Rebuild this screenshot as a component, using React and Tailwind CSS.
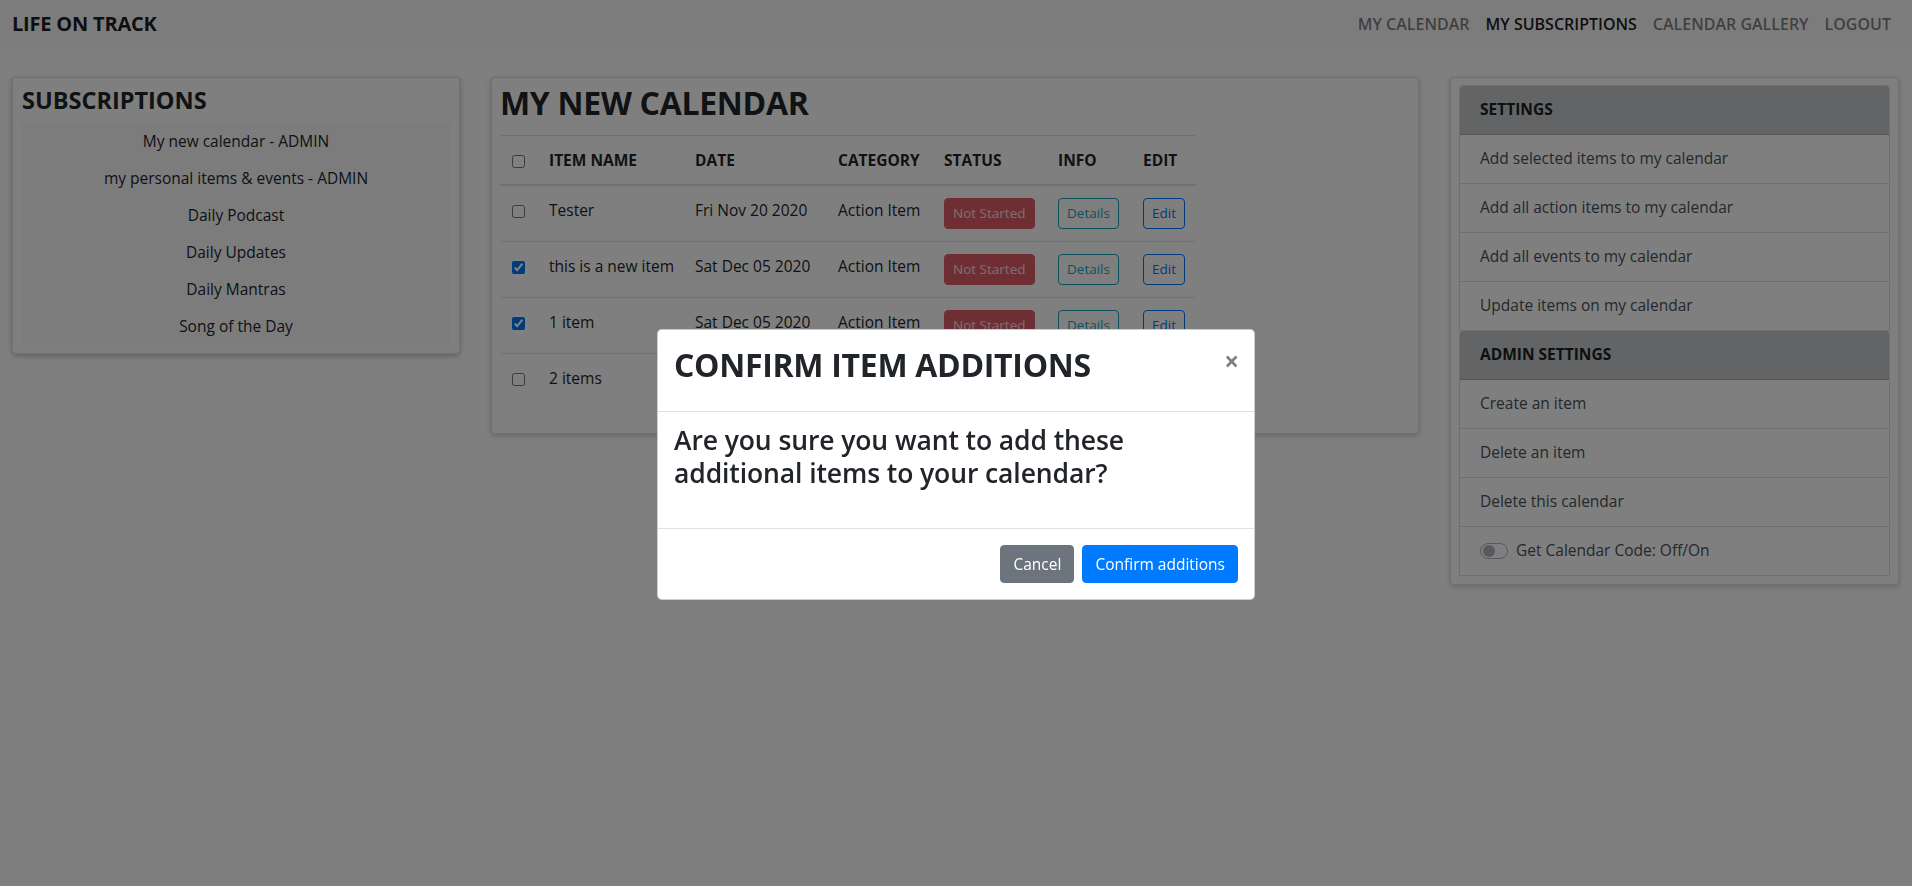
import React from 'react';

const subscriptions = [
    'My new calendar - ADMIN',
    'my personal items & events - ADMIN',
    'Daily Podcast',
    'Daily Updates',
    'Daily Mantras',
    'Song of the Day',
];

const items = [
    { name: 'Tester', date: 'Fri Nov 20 2020', checked: false },
    { name: 'this is a new item', date: 'Sat Dec 05 2020', checked: true },
    { name: '1 item', date: 'Sat Dec 05 2020', checked: true },
    { name: '2 items', date: 'Sat Dec 05 2020', checked: false },
];

const settings = [
    'Add selected items to my calendar',
    'Add all action items to my calendar',
    'Add all events to my calendar',
    'Update items on my calendar',
];

const adminSettings = ['Create an item', 'Delete an item', 'Delete this calendar'];

function Navbar() {
    return (
        <nav className="h-[48px] bg-[#f8f9fa] flex items-center justify-between pl-3 pr-[13px]">
            <span className="text-[20px] font-bold text-black/90 tracking-[-0.2px]">LIFE ON TRACK</span>
            <div className="flex items-center text-[16px] font-semibold">
                <a className="px-2 text-black/50">MY CALENDAR</a>
                <a className="px-2 text-black/90">MY SUBSCRIPTIONS</a>
                <a className="px-2 text-black/50">CALENDAR GALLERY</a>
                <a className="px-2 text-black/50">LOGOUT</a>
            </div>
        </nav>
    );
}

function SubscriptionsCard() {
    return (
        <div className="self-start bg-white border border-black/[0.125] rounded shadow-[0_2px_6px_rgba(0,0,0,0.25)] p-2">
            <h4 className="text-[23.5px] font-bold leading-[29px] text-[#212529] mb-2 pl-px">SUBSCRIPTIONS</h4>
            <div className="bg-[#f8f9fa]">
                {subscriptions.map((s) => (
                    <div key={s} className="h-[37px] flex items-center justify-center text-[15.5px] text-[#212529]">
                        {s}
                    </div>
                ))}
            </div>
        </div>
    );
}

function Checkbox({ checked }) {
    return (
        <input
            type="checkbox"
            defaultChecked={checked}
            className="w-[13px] h-[13px] m-0 align-middle accent-[#0075ff]"
        />
    );
}

function CalendarCard() {
    return (
        <div className="self-start bg-white border border-black/[0.125] rounded shadow-[0_2px_6px_rgba(0,0,0,0.2)] px-2 pt-[6px] pb-[24px]">
            <h2 className="text-[32px] font-bold leading-[38px] text-[#212529] mb-[13px] tracking-[-0.3px]">MY NEW CALENDAR</h2>
            <table className="text-[15.5px] text-[#212529] border-collapse table-fixed w-[696px]">
                <colgroup>
                    <col className="w-[37px]" />
                    <col className="w-[146px]" />
                    <col className="w-[143px]" />
                    <col className="w-[106px]" />
                    <col className="w-[114px]" />
                    <col className="w-[85px]" />
                    <col className="w-[65px]" />
                </colgroup>
                <thead>
                    <tr className="border-t border-b-2 border-[#dee2e6] text-left font-bold">
                        <th className="p-3 pr-0 leading-6"><Checkbox checked={false} /></th>
                        <th className="p-3 leading-6 whitespace-nowrap">ITEM NAME</th>
                        <th className="p-3 leading-6">DATE</th>
                        <th className="p-3 leading-6">CATEGORY</th>
                        <th className="p-3 leading-6">STATUS</th>
                        <th className="p-3 leading-6">INFO</th>
                        <th className="p-3 leading-6">EDIT</th>
                    </tr>
                </thead>
                <tbody>
                    {items.map((it) => (
                        <tr key={it.name} className="border-t border-[#dee2e6] align-top">
                            <td className="p-3 pr-0 leading-6"><Checkbox checked={it.checked} /></td>
                            <td className="p-3 leading-6 whitespace-nowrap">{it.name}</td>
                            <td className="p-3 leading-6 whitespace-nowrap">{it.date}</td>
                            <td className="p-3 leading-6 whitespace-nowrap">Action Item</td>
                            <td className="p-3 whitespace-nowrap">
                                <span className="inline-block h-[31px] px-2 leading-[29px] rounded border border-[#de5d69] bg-[#de5d69] text-white/80 text-[13.5px]">Not Started</span>
                            </td>
                            <td className="p-3">
                                <span className="inline-block h-[31px] px-2 leading-[29px] rounded border border-[#17a2b8] text-[#17a2b8] text-[13.5px]">Details</span>
                            </td>
                            <td className="p-3">
                                <span className="inline-block h-[31px] px-2 leading-[29px] rounded border border-[#007bff] text-[#007bff] text-[13.5px]">Edit</span>
                            </td>
                        </tr>
                    ))}
                </tbody>
            </table>
        </div>
    );
}

function ListItem({ children }) {
    return (
        <div className="h-[49px] flex items-center px-5 border-b border-black/[0.125] text-[15.5px] text-[#495057] bg-white">
            {children}
        </div>
    );
}

function SettingsCard() {
    return (
        <div className="self-start bg-white border border-black/[0.125] rounded shadow-[0_2px_6px_rgba(0,0,0,0.2)] px-2 pt-[7px] pb-2">
            <div className="border-x border-t border-black/[0.125] rounded-t">
                <div className="h-[49px] flex items-center px-5 bg-[#c6c8ca] border-b border-black/[0.125] rounded-t text-[15.5px] font-bold text-[#1b1e21]">
                    SETTINGS
                </div>
                {settings.map((s) => (
                    <ListItem key={s}>{s}</ListItem>
                ))}
            </div>
            <div className="border-x border-black/[0.125] rounded-t">
                <div className="h-[49px] flex items-center px-5 bg-[#c6c8ca] border-b border-black/[0.125] rounded-t text-[15.5px] font-bold text-[#1b1e21]">
                    ADMIN SETTINGS
                </div>
                {adminSettings.map((s) => (
                    <ListItem key={s}>{s}</ListItem>
                ))}
                <ListItem>
                    <span className="relative inline-block w-[28px] h-[16px] rounded-full border border-[#adb5bd] bg-white mr-2">
                        <span className="absolute left-[2px] top-[1px] w-[12px] h-[12px] rounded-full bg-[#adb5bd]" />
                    </span>
                    Get Calendar Code: Off/On
                </ListItem>
            </div>
        </div>
    );
}

function ConfirmModal() {
    return (
        <div className="fixed inset-0 z-50">
            <div className="mx-auto mt-[329px] w-[598px] bg-white rounded-[5px] border border-black/20">
                <div className="flex items-start justify-between pl-4 pr-[15px] pt-4 pb-[27px] border-b border-[#dee2e6]">
                    <h2 className="text-[32px] font-bold leading-[38px] text-[#212529] tracking-[-0.3px]">CONFIRM ITEM ADDITIONS</h2>
                    <span className="text-[26px] font-bold leading-[30px] text-black/50">×</span>
                </div>
                <div className="px-4 pt-[12px] pb-[38px] border-b border-[#dee2e6]">
                    <h3 className="text-[26.5px] font-semibold leading-[33px] text-[#212529] w-[480px] tracking-[-0.1px]">
                        Are you sure you want to add these additional items to your calendar?
                    </h3>
                </div>
                <div className="flex justify-end gap-2 px-4 py-4">
                    <span className="h-[38px] px-3 leading-[36px] rounded border border-[#6c757d] bg-[#6c757d] text-white text-[15.5px]">Cancel</span>
                    <span className="h-[38px] px-3 leading-[36px] rounded border border-[#007bff] bg-[#007bff] text-white text-[15.5px]">Confirm additions</span>
                </div>
            </div>
        </div>
    );
}

export default function App() {
    return (
        <div className="relative h-[886px] bg-white font-['Open_Sans',sans-serif] overflow-hidden">
            <Navbar />
            <main className="grid grid-cols-[448px_928px_449px] gap-x-[31px] pl-3 mt-[29px]">
                <SubscriptionsCard />
                <CalendarCard />
                <SettingsCard />
            </main>
            <div className="fixed inset-0 bg-black/50" />
            <ConfirmModal />
        </div>
    );
}
